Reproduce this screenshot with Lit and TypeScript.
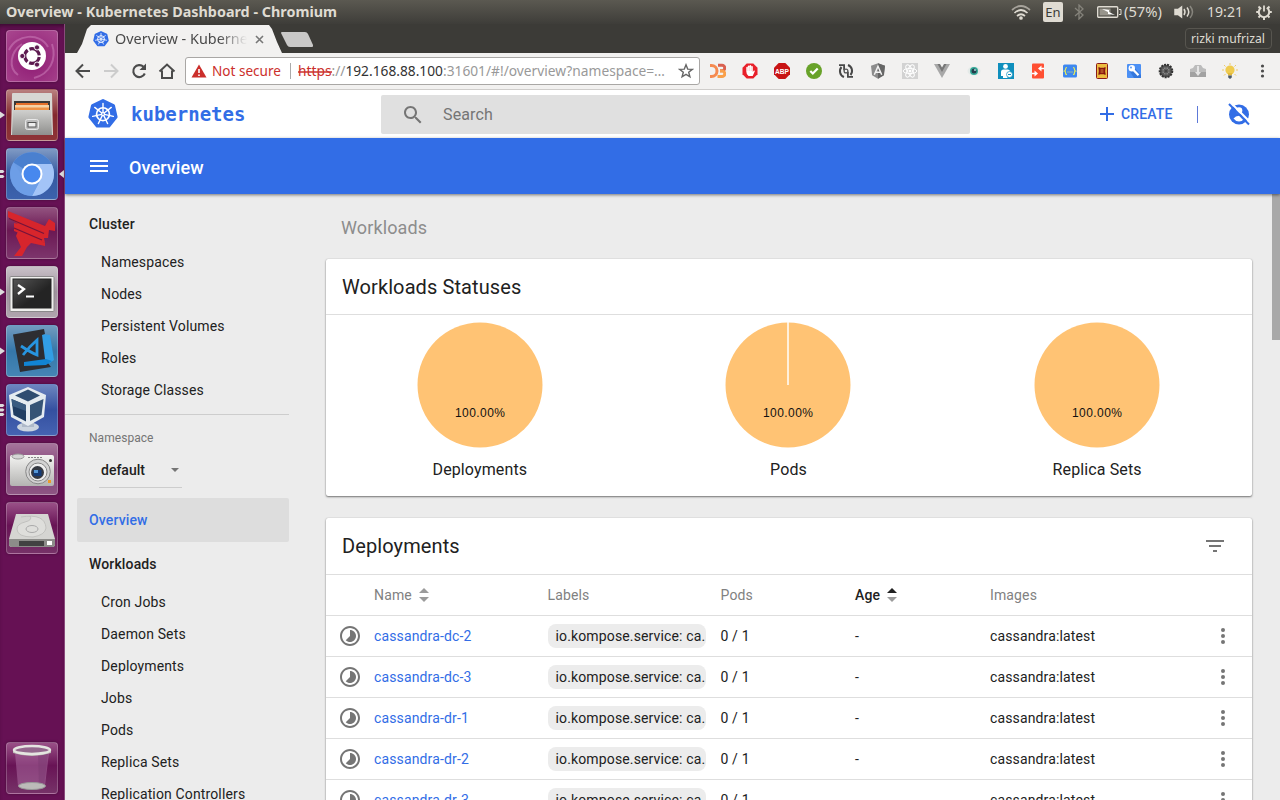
import { LitElement, html, svg, css } from "lit";
import { customElement } from "lit/decorators.js";

const label = (text: string, width: number, size: number, cls = "", height = 20, base = 15) => html`
  <svg class="fit ${cls}" width=${width} height=${height} viewBox="0 0 ${width} ${height}">
    <text x="0" y=${base} font-size=${size} textLength=${width} lengthAdjust="spacingAndGlyphs">${text}</text>
  </svg>`;

const pt = (r: number, i: number, off = 0) => {
  const a = ((i * 360) / 7 - 90 + off) * (Math.PI / 180);
  return [(16 + r * Math.cos(a)).toFixed(2), (16 + r * Math.sin(a)).toFixed(2)];
};
const seven = [0, 1, 2, 3, 4, 5, 6];
const helm = (size: number) => html`
  <svg width=${size} height=${size} viewBox="0 0 32 32">
    <polygon points=${seven.map((i) => pt(14.2, i).join(",")).join(" ")} fill="#326de6" stroke="#326de6" stroke-width="3.4" stroke-linejoin="round"/>
    <circle cx="16" cy="16.2" r="6.9" fill="none" stroke="#fff" stroke-width="1.8"/>
    ${seven.map((i) => {
      const a = pt(1.6, i), b = pt(11.3, i);
      return svg`<line x1=${a[0]} y1=${a[1]} x2=${b[0]} y2=${b[1]} stroke="#fff" stroke-width="1.5" stroke-linecap="round"/>`;
    })}
    <circle cx="16" cy="16" r="2.2" fill="#fff"/><circle cx="16" cy="16" r=".9" fill="#326de6"/>
  </svg>`;

const extIcons = [
  svg`<path d="M0 2.500h1.500a5.500 5.500 0 0 1 0 11H0" fill="none" stroke="#f58a50" stroke-width="3"/><path d="M8 2.300h4a2.600 2.600 0 0 1 0 5.500H10" fill="none" stroke="#d9604f" stroke-width="3"/><path d="M10 8h2a2.700 2.700 0 0 1 0 5.600H7.500" fill="none" stroke="#f9a04a" stroke-width="3"/>`,
  svg`<path d="M4.700.5h6.600l4.200 4.200v6.600l-4.200 4.200H4.700L.5 11.300V4.700z" fill="#e8202a"/><path d="M4.300 8.500V4.300q.8-.9 1.500 0V3q.9-1 1.700 0v-.5q1-.9 1.700 0V3.500q.9-.9 1.600 0V9l1-1.500q1.200-.3 1 .7L10.700 13H6.500Q4.300 11.500 4.300 8.500z" fill="#fff"/><path d="M5.900 4v4M7.600 3.500V8M9.300 4v4" stroke="#e8a0a0" stroke-width=".4"/>`,
  svg`<path d="M4.700 0h6.600L16 4.700v6.600L11.300 16H4.700L0 11.300V4.700z" fill="#c81414"/><text x="8" y="10.900" font-size="8" font-weight="700" text-anchor="middle" fill="#fff" letter-spacing="0" textLength="14" lengthAdjust="spacingAndGlyphs" font-family="Liberation Sans,sans-serif">ABP</text>`,
  svg`<circle cx="8" cy="8" r="8" fill="#68a229"/><path d="M4.300 8l2.500 2.500L11.700 5.500" fill="none" stroke="#fff" stroke-width="2.200"/>`,
  svg`<path d="M6 14A6.300 6.300 0 0 1 3.500 4M10 2a6.300 6.300 0 0 1 2.500 10" fill="none" stroke="#484848" stroke-width="2"/><path d="M1 1.200h6v6H5.200V3H1zM15 14.800H9v-6h1.800V13H15z" fill="#484848"/><circle cx="8" cy="8" r="1.900" fill="#f2f1f0" stroke="#555" stroke-width="1.300"/>`,
  svg`<path d="M8 .3l7 2.500-1.100 9.400L8 15.800l-5.900-3.600L1 2.800z" fill="#8c8c8c"/><path d="M8 .3l7 2.500-1.100 9.400L8 15.800z" fill="#666"/><path d="M4.300 11.800L8 3.300l3.700 8.500M5.800 9.200h4.400" fill="none" stroke="#f4f4f4" stroke-width="1.500"/>`,
  svg`<rect width="16" height="16" fill="#d2d2d2"/><g fill="none" stroke="#fff" stroke-width="1"><ellipse cx="8" cy="8" rx="6.800" ry="2.600"/><ellipse cx="8" cy="8" rx="6.800" ry="2.600" transform="rotate(60 8 8)"/><ellipse cx="8" cy="8" rx="6.800" ry="2.600" transform="rotate(120 8 8)"/></g><circle cx="8" cy="8" r="1.500" fill="#fff"/>`,
  svg`<path d="M0 1h16L8 15z" fill="#a8a8a8"/><path d="M3.500 1h9L8 9z" fill="#777"/><path d="M6 1h4L8 4.600z" fill="#f2f1f0"/>`,
  svg`<ellipse cx="8" cy="8" rx="6.500" ry="4.500" fill="#e4eae8"/><circle cx="8" cy="8" r="4" fill="#35aa98"/><circle cx="8" cy="8" r="2.500" fill="#253c4c"/><circle cx="9" cy="7" r=".9" fill="#b6e4e4"/>`,
  svg`<rect width="16" height="16" fill="#0f8fbd"/><circle cx="7.500" cy="3.400" r="2.400" fill="#fff"/><path d="M3 13V9q0-2.500 2.500-2.500h4.500q2 0 2.200 2.500L9.500 10v5H5V9.500v3.500z" fill="#fff"/><circle cx="11.500" cy="11.500" r="3" fill="#fff" stroke="#0f8fbd" stroke-width=".7"/><path d="M10 11.500h3" stroke="#0f8fbd"/>`,
  svg`<rect x="2" y=".5" width="12" height="15" rx="1" fill="#ff4f32"/><path d="M2 10.500h3M14 5.500h-3" stroke="#fff" stroke-width="1.500"/><path d="M4.500 7.500l3.500 3-3.500 3zM11.500 2.500L8 5.500l3.500 3z" fill="#fff"/>`,
  svg`<rect x="1" y="1.500" width="14" height="13" rx="1.500" fill="#3e87ef"/><path d="M5 4.500q-1.400 0-1.400 1.500T2.500 8q1.100.3 1.100 2T5 11.500M11 4.500q1.400 0 1.400 1.500t1.100 2q-1.100.3-1.100 2T11 11.500M5.500 9h1M7.500 9h1M9.500 9h1" fill="none" stroke="#e9ec58" stroke-width="1.200"/>`,
  svg`<rect x="2.500" y=".5" width="11" height="15" rx="1" fill="#edbb3f" stroke="#8b1a1a"/><path d="M4.500 4q3.500 2 7 0v2.500q-3.500 1.500-7 0zM4.500 9.500q3.500-1.500 7 0V12q-3.500-2-7 0z" fill="#7d1010"/><circle cx="8" cy="8" r="3.300" fill="#8b1610"/><path d="M6.500 7h3M6.500 9h3" stroke="#e9a94a" stroke-width=".8"/>`,
  svg`<rect x="1" y="1" width="14" height="14" rx="1" fill="#4c90f4"/><path d="M3 7l5 8h7v-3L8 4z" fill="#3578dd"/><circle cx="5.800" cy="5.300" r="3.200" fill="#fff"/><circle cx="5" cy="4.500" r=".9" fill="#4c90f4"/><path d="M7.500 7l5 5.300" stroke="#fff" stroke-width="2.200"/>`,
  svg`<circle cx="8" cy="8" r="6.300" fill="#555" stroke="#333" stroke-width="2" stroke-dasharray="2 1"/><circle cx="8" cy="8" r="3.800" fill="#858585"/><circle cx="8" cy="8" r="1.600" fill="#333"/><path d="M8 3v10M3 8h10M4.500 4.500l7 7M11.500 4.500l-7 7" stroke="#484848" stroke-width=".7"/>`,
  svg`<path d="M0 6l3-1 2-3h6l2 3 3 1v8H0z" fill="#bcbcbc"/><path d="M0 9h16v5H0z" fill="#a2a2a2"/><path d="M7 3h2v6h2l-3 4-3-4h2z" fill="#e6e6e6"/>`,
  svg`<g stroke="#edcb6a"><path d="M8 0v2M0 7h2M14 7h2M2 2l1.500 1.500M14 2l-1.500 1.500M2 12.500L3.500 11M14 12.500L12.500 11"/></g><circle cx="8" cy="7" r="4.600" fill="#efcb4f"/><path d="M6 10h4v2.500H6z" fill="#e3b93d"/><path d="M6.200 12.500h3.600v2L8 16l-1.800-1.500z" fill="#4d5b68"/>`,
];

const launcher = [
  { bg: "bfb", marks: 0, art: svg`<path d="M3 20C10 4 34 2 42 17M12 45C2 38 4 22 16 14M46 14c5 15-2 30-18 34" fill="none" stroke="#cf83bd" stroke-width="2" opacity=".5"/><circle cx="26" cy="26" r="14" fill="#fff"/><circle cx="26" cy="26" r="7.300" fill="none" stroke="#5d1a50" stroke-width="3.200" stroke-dasharray="13.300 2" stroke-dashoffset="-1"/><g fill="#5d1a50" stroke="#fff" stroke-width=".9"><circle cx="16.300" cy="26" r="2.600"/><circle cx="31" cy="17.400" r="2.600"/><circle cx="31" cy="34.600" r="2.600"/></g>` },
  { bg: "files", marks: 1, art: svg`<path d="M6 5q0-1 1-1h38q1 0 1 1l1 41H5z" fill="#d7d7d3"/><path d="M8 12h36v10H8z" fill="#3b3937"/><path d="M10 14h32v3H10z" fill="#e57029"/><path d="M9 16h34v5H9z" fill="#f5d3a6"/><path d="M9 18.500h34v3H9z" fill="#ee9347"/><path d="M7 21h38l1 25H6z" fill="url(#metal)"/><rect x="19.500" y="30.500" width="13" height="10" rx="2" fill="#bbb" stroke="#e8e8e8"/><rect x="22" y="33.500" width="8" height="4.500" fill="#eee" stroke="#555"/>` },
  { bg: "chromium", marks: 2, active: true, art: svg`<circle cx="26" cy="26" r="22" fill="#6a9be3"/><path d="M26 26L7.500 14.500A22 22 0 0 1 45.500 16H26z" fill="#4a80cf"/><path d="M27 16h18.600a22 22 0 0 1-19.600 32l9-18z" fill="#a3c4f7"/><path d="M7.500 14.500A22 22 0 0 0 26 48l8-15-15-1z" fill="#6d9ee7"/><circle cx="26" cy="26" r="10.500" fill="#fff"/><circle cx="26" cy="26" r="8.500" fill="#4788ee"/>` },
  { bg: "red", marks: 0, art: svg`<path d="M2 4l37 15 4-7 6 4v8l-6-1-1 8h-4l1 5L8 24v-8l4 1-10-7z" fill="#d7252c"/><path d="M11 29l26 7M13 22l26 14v3l-14-3-4 4-5 9H8l7-9-5-11z" fill="#d7252c"/><path d="M3 11.500l35 15M8 21l28 12" stroke="#74143b" stroke-width="1.300" fill="none"/>` },
  { bg: "term", marks: 1, art: svg`<rect x="4" y="10.500" width="44" height="35" rx="1" fill="#f0f0ee" stroke="#8b898a"/><rect x="7" y="13" width="38" height="29" fill="url(#dark)" stroke="#222"/><path d="M12 19l6 4-6 5" fill="none" stroke="#fff" stroke-width="2.300"/><path d="M20 30.500h8" stroke="#fff" stroke-width="2"/>` },
  { bg: "code", marks: 1, art: svg`<path d="M36 9l8 1 4 25-7 5-5-2z" fill="#329ee5"/><path d="M7 9.500L38 4l1 5-3 1 3 24 6 8-31 5z" fill="#2d2d31"/><path d="M18 37l22-3 6 2-6 4-22 1z" fill="#1184d3"/><path d="M15 21q9 6 16 9V15Q24 21 17 30" fill="none" stroke="#2795e0" stroke-width="2.800"/>` },
  { bg: "vbox", marks: 3, art: svg`<ellipse cx="22" cy="43" rx="11" ry="4.500" fill="#cbd4df"/><path d="M16 38h12v5H16z" fill="#aeb9c9"/><path d="M3 11L22 3l18 8-2 22-16 9-17-9z" fill="#e5ebf0"/><path d="M9 11.500L22 5.500l12 6-12 6z" fill="#304d70"/><path d="M5.500 15L20 21v16.500L7.500 31z" fill="#203d62"/><path d="M24 21l13.500-6-2 16-11.500 6z" fill="#365476"/><path d="M5.500 15L20 21v6L6.300 22z" fill="#3a5b80"/>` },
  { bg: "cam", marks: 0, art: svg`<rect x="4" y="12" width="44" height="31" rx="2" fill="url(#light)"/><ellipse cx="12" cy="13.500" rx="6" ry="2.500" fill="#d5d5d5" stroke="#999"/><path d="M22 14.500h14" stroke="#888" stroke-dasharray="2 1"/><circle cx="32" cy="28.500" r="12.300" fill="#d2d2d2" stroke="#888"/><circle cx="32" cy="29" r="9" fill="#eee" stroke="#888"/><circle cx="31.500" cy="29.500" r="6.500" fill="#353942"/><rect x="27.500" y="27" width="8" height="6" fill="#143b77"/><path d="M28 27h4v3h-4z" fill="#5396d7"/><rect x="42" y="37" width="3" height="3" fill="#ed9b27"/><circle cx="44.500" cy="17.500" r="1.500" fill="#333"/>` },
  { bg: "disk", marks: 0, art: svg`<path d="M10 12h32l7 25v5q0 3-3 3H6q-3 0-3-3v-5z" fill="#d5d5d2"/><path d="M3 37h46v5q0 3-3 3H6q-3 0-3-3z" fill="#8c8c89"/><path d="M13 39h25v5H13z" fill="#424242"/><path d="M41 39h5v4h-5z" fill="#fff"/><path d="M15 15q24-4 25 11-1 7-13 9-16 0-16-8 0-5 8-7 8-2 5-6" fill="#dededb" stroke="#b7b7b4" stroke-width=".7"/><ellipse cx="26" cy="27" rx="6" ry="3.500" fill="none" stroke="#aaa"/>` },
];
const trash = svg`<path d="M9 11l3 33q14 6 27 0l4-33z" fill="#b57bac" opacity=".45"/><path d="M32 12h10l-4 31q-4 2-5 2z" fill="#7a3a72" opacity=".45"/><ellipse cx="26" cy="44" rx="13.500" ry="3.500" fill="#bcbcb9" stroke="#999"/><path d="M7 8v3q19 6 38 0V8z" fill="#b8b8b3"/><ellipse cx="26" cy="8" rx="18" ry="4" fill="#94678d" stroke="#e5e5e1" stroke-width="2.500"/>`;

const cluster = ["Namespaces", "Nodes", "Persistent Volumes", "Roles", "Storage Classes"];
const workloads = ["Cron Jobs", "Daemon Sets", "Deployments", "Jobs", "Pods", "Replica Sets", "Replication Controllers"];
const pies = [{ name: "Deployments", seam: false }, { name: "Pods", seam: true }, { name: "Replica Sets", seam: false }];
const deployments = ["cassandra-dc-2", "cassandra-dc-3", "cassandra-dr-1", "cassandra-dr-2", "cassandra-dr-3"];

@customElement("app-root")
export class AppRoot extends LitElement {
  static styles = css`
    :host { display: flex; flex-direction: column; width: 1280px; height: 800px; overflow: hidden; font-family: Roboto, sans-serif; font-size: 14px; letter-spacing: 0.14px; color: #212121; background: #ececec; }
    * { box-sizing: border-box; }
    svg { display: block; flex: none; }
    .fit { overflow: visible; font-family: "Noto Sans", sans-serif; letter-spacing: 0; }
    .bold { font-weight: 700; }
    .paneltext { fill: #dfdbd2; }
    .tabtext { fill: #4a4a4a; }
    .panel { height: 24px; flex: none; background: linear-gradient(#5b5951, #3e3d39); display: flex; align-items: center; padding: 0 8px 0 6px; }
    .panel .tray { margin-left: auto; display: flex; align-items: center; }
    .lang { width: 20px; height: 20px; border-radius: 2px; background: #dfdbd2; color: #3c3b37; font: 13px "Noto Sans", sans-serif; letter-spacing: 0; text-align: center; line-height: 21px; margin: 0 11px 0 12px; }
    .battery { margin-left: 13px; }
    .percent { margin-left: 2px; }
    .volume { margin-left: 12px; }
    .clock { margin-left: 13px; }
    .power { margin-left: 13px; }
    .desk { display: flex; flex: 1; min-height: 0; }
    .dock { width: 65px; flex: none; background: #661154; border-right: 1px solid #8a4a7c; display: flex; flex-direction: column; gap: 7px; padding: 6px 0; box-shadow: inset 0 4px 4px -2px #3a0a30; }
    .slot { display: grid; grid-template-columns: 6px 52px 6px; height: 52px; align-items: center; flex: none; }
    .tile { width: 52px; height: 52px; border-radius: 4px; border: 1px solid rgba(255,255,255,.22); box-shadow: 0 0 3px rgba(0,0,0,.35); }
    .tile svg { margin: -1px; }
    .last { margin-top: auto; }
    .bfb { background: radial-gradient(circle at 50% 60%, #8e1a73, #a9478f); }
    .files { background: linear-gradient(#b9807f, #84292f 50%, #8e3437); }
    .chromium { background: linear-gradient(#7f9ac4, #3559a0 50%, #3c62ad); }
    .red { background: linear-gradient(#92527f, #6b1853 45%, #7d356c); }
    .term { background: linear-gradient(#c9c1c8, #9f929d 50%, #b0a5ae); }
    .code { background: linear-gradient(#729bbf, #3577a9 50%, #4585b5); }
    .vbox { background: linear-gradient(#6d86c0, #3450a0 50%, #4563b2); }
    .cam { background: linear-gradient(#a5749b, #824077 50%, #8d5583); }
    .disk, .trash { background: linear-gradient(#995087, #681355 45%, #763268); }
    .browser { flex: 1; display: flex; flex-direction: column; min-width: 0; }
    .tabs { height: 29px; flex: none; background: #3c3b37; display: flex; padding-left: 12px; }
    .tab { width: 205px; height: 29px; clip-path: polygon(0 100%, 5px 20px, 10px 5px, 14px 1px, 192px 1px, 195px 5px, 200px 18px, 205px 100%); background: #f2f1f0; display: flex; align-items: center; padding: 1px 0 0 16px; }
    .tab .name { margin-left: 6px; width: 133px; overflow: hidden; -webkit-mask-image: linear-gradient(90deg, #000 104px, transparent 132px); mask-image: linear-gradient(90deg, #000 104px, transparent 132px); }
    .close { margin-left: 7px; }
    .newtab { margin: 8px 0 0 -1px; }
    .user { margin: 4px 8px 0 auto; width: 87px; height: 21px; border: 1px solid #57554f; border-radius: 4px; background: #3c3b37; padding-left: 5px; }
    .toolbar { height: 37px; flex: none; background: #f2f1f0; border-bottom: 1px solid #cfcdcb; display: flex; align-items: center; padding-left: 8px; }
    .nav { display: flex; gap: 8px; margin-right: 8px; }
    .nav svg { width: 20px; height: 20px; }
    .omni { width: 515px; height: 28px; background: #fff; border: 1px solid #a9a7a5; border-radius: 3px; display: flex; align-items: center; padding: 0 5px 0 5px; }
    .omni .sep { width: 1px; height: 16px; background: #aaa; margin: 0 7px 0 9px; }
    .omni .fit { margin-top: 1px; }
    .insecure { margin-left: 5px; }
    .star { margin-left: auto; }
    .exts { display: flex; gap: 16px; margin-left: 10px; }
    .k8shead { height: 48px; flex: none; background: #fff; display: flex; align-items: center; padding-left: 23px; }
    .word { font: 700 19px "DejaVu Sans Mono", monospace; color: #326de6; letter-spacing: 0; margin-left: 13px; width: 250px; line-height: 22px; }
    .search { width: 589px; height: 39px; background: #e0e0e0; border-radius: 2px; display: flex; align-items: center; padding-left: 20px; gap: 18px; font-size: 16px; color: #757575; margin-top: 1px; }
    .create { margin-left: 125px; display: flex; align-items: center; gap: 2px; color: #326de6; font-weight: 500; letter-spacing: .14px; }
    .bar { width: 1px; height: 17px; background: #5d79d8; margin: 0 26px 0 24px; }
    .action { height: 56px; flex: none; background: #326de6; color: #fff; display: flex; align-items: center; padding-left: 22px; gap: 18px; font-size: 18px; font-weight: 500; letter-spacing: .1px; box-shadow: 0 1px 3px rgba(0,0,0,.5); z-index: 1; position: relative; }
    .action span { margin-top: 3px; }
    .page { flex: 1; min-height: 0; display: flex; background: #ececec; }
    .side { width: 224px; flex: none; padding-top: 8px; overflow: hidden; }
    .group { height: 44px; line-height: 44px; padding-left: 24px; font-weight: 500; }
    .item { height: 32px; line-height: 32px; padding-left: 36px; white-space: nowrap; }
    .rule { height: 1px; background: #cdcdcd; margin-top: 8px; }
    .nslabel { font-size: 12px; color: #757575; padding-left: 24px; height: 38px; line-height: 46px; letter-spacing: .05px; }
    .select { margin: 0 0 10px 34px; width: 83px; height: 35px; border-bottom: 1px solid #cdcdcd; font-weight: 500; letter-spacing: 0; display: flex; justify-content: space-between; align-items: center; padding: 0 3px 0 2px; }
    .current { height: 44px; margin-left: 12px; border-radius: 2px; background: #dddddd; padding-left: 12px; line-height: 44px; font-weight: 500; color: #326de6; }
    .main { flex: 1; min-width: 0; padding: 0 21px 0 37px; overflow: hidden; }
    h2 { margin: 0; height: 65px; line-height: 67px; padding-left: 15px; font-weight: 400; font-size: 18px; color: #8d8d8d; letter-spacing: .12px; }
    .card { width: 926px; margin-left: -.5px; background: #fff; border-radius: 2px; box-shadow: 0 1px 2px rgba(0,0,0,.5), 0 0 1px rgba(0,0,0,.25); }
    .title { height: 56px; border-bottom: 1px solid #dedede; padding: 0 25px 0 16.5px; font-size: 20px; letter-spacing: .1px; display: flex; justify-content: space-between; align-items: center; }
    .tall { height: 57px; }
    .pies { display: grid; grid-template-columns: repeat(3, 1fr); height: 181px; margin-bottom: 22px; }
    .pie { display: flex; flex-direction: column; align-items: center; padding-top: 7px; font-size: 16px; letter-spacing: .12px; gap: 12px; }
    .pie svg { font: 12px "Liberation Sans", sans-serif; letter-spacing: 0; }
    .row { display: grid; grid-template-columns: 48.5px 173.5px 173px 134.5px 135px 1fr 55px; height: 41px; align-items: center; border-bottom: 1px solid #dedede; }
    .head { color: #818181; }
    .th { display: flex; align-items: center; gap: 7px; }
    .sorted { font-weight: 500; color: #212121; letter-spacing: .14px; }
    .link { color: #326de6; }
    .status { margin-left: 12.5px; }
    .chip { width: 158px; height: 24px; line-height: 24px; border-radius: 8px; background: #ececec; padding-left: 8px; white-space: nowrap; overflow: hidden; }
    .track { width: 8px; flex: none; background: #ececec; }
    .thumb { height: 146px; background: #a8a8a8; }
  `;

  arrows(active: boolean) {
    return html`<svg width="10" height="14" viewBox="0 0 10 14"><path d="M0 5l5-5 5 5z" fill=${active ? "#212121" : "#9b9b9b"}/><path d="M0 9h10l-5 5z" fill="#9b9b9b"/></svg>`;
  }

  slotView(t: any, extra = "") {
    return html`<div class="slot ${extra}">
      <svg width="6" height="20" viewBox="0 0 6 20">${t.marks === 1 ? svg`<path d="M0 6.500L5 10 0 13.500z" fill="#ddd"/>` : t.marks === 2 ? svg`<path d="M0 6h3l1.500 1.500L3 9H0zM0 11h3l1.500 1.500L3 14H0z" fill="#ddd"/>` : t.marks === 3 ? svg`<path d="M0 4h3l1.500 1.200L3 7H0zM0 8.500h3l1.500 1.200L3 11.500H0zM0 13h3l1.500 1.200L3 16H0z" fill="#ddd"/>` : ""}</svg>
      <div class="tile ${t.bg}"><svg width="52" height="52" viewBox="0 0 52 52">
        <defs><linearGradient id="metal" x2="0" y2="1"><stop stop-color="#d0d0ce"/><stop offset="1" stop-color="#8f8f8d"/></linearGradient><linearGradient id="light" x2="0" y2="1"><stop stop-color="#f4f4f2"/><stop offset="1" stop-color="#b4b4b2"/></linearGradient><linearGradient id="dark" x2="1" y2="1"><stop stop-color="#555"/><stop offset=".6" stop-color="#242424"/></linearGradient></defs>
        ${t.art}</svg></div>
      ${t.active ? html`<svg width="6" height="10" viewBox="0 0 6 10"><path d="M6 1v8L1 5z" fill="#ddd"/></svg>` : ""}
    </div>`;
  }

  render() {
    return html`
      <div class="panel">
        ${label("Overview - Kubernetes Dashboard - Chromium", 331, 14, "bold paneltext", 20, 15)}
        <div class="tray">
          <svg width="20" height="16" viewBox="0 0 20 16" fill="none" stroke="#dfdbd2" stroke-width="1.700"><path d="M1 6Q10-2 19 6" opacity=".6"/><path d="M3.500 9Q10 3 16.500 9M6 12Q10 8.500 14 12"/><circle cx="10" cy="14" r="1" fill="#dfdbd2"/></svg>
          <div class="lang">En</div>
          <svg width="10" height="16" viewBox="0 0 10 16" fill="none" stroke="#85837b" stroke-width="1.300"><path d="M1 4l8 7-4 4V1l4 4-8 7"/></svg>
          <svg class="battery" width="25" height="14" viewBox="0 0 25 14"><rect x=".7" y="1.700" width="20" height="10.600" rx="1" fill="none" stroke="#dfdbd2" stroke-width="1.400"/><path d="M22 4.500h2v5h-2" fill="none" stroke="#dfdbd2"/><rect x="2.500" y="3.500" width="11" height="7" fill="#98958c"/><path d="M5 4l7 1v2l6 3-7-1V7z" fill="#fff"/></svg>
          <span class="percent">${label("(57%)", 38, 14, "paneltext")}</span>
          <svg class="volume" width="20" height="16" viewBox="0 0 20 16" fill="none" stroke="#dfdbd2" stroke-width="1.500"><path d="M1 5.500h3L7.500 3v10L4 10.500H1z" fill="#dfdbd2"/><path d="M10 5q2 3 0 6M13 3.500q3.500 4.500 0 9"/><path d="M16 2q5 6 0 12" opacity=".4"/></svg>
          <span class="clock">${label("19:21", 36, 14, "paneltext")}</span>
          <svg class="power" width="16" height="16" viewBox="0 0 16 16" fill="none" stroke="#dfdbd2"><path d="M5.200 3.600a5.200 5.200 0 1 0 5.600 0" stroke-width="2"/><path d="M8 1.500v6" stroke-width="1.800"/><path d="M.2 8h2.500M13.300 8h2.500M2.500 2.500l1.600 1.600M13.500 2.500l-1.600 1.600M2.500 13.500l1.600-1.600M13.500 13.500l-1.600-1.600M8 13v3" stroke-width="2"/></svg>
        </div>
      </div>
      <div class="desk">
        <div class="dock">
          ${launcher.map((t) => this.slotView(t))}
          ${this.slotView({ bg: "trash", marks: 0, art: trash }, "last")}
        </div>
        <div class="browser">
          <div class="tabs">
            <div class="tab">
              ${helm(16)}
              <div class="name">${label("Overview - Kubernetes", 153, 14.5, "tabtext", 20, 15)}</div>
              <svg class="close" width="9" height="9" viewBox="0 0 9 9"><path d="M1 1l7 7M8 1L1 8" stroke="#777" stroke-width="1.600"/></svg>
            </div>
            <svg class="newtab" width="33" height="15" viewBox="0 0 33 15"><path d="M0 1q0-1 1-1h23q2 0 3 2l5 11q.5 2-1 2H9q-2 0-3-2z" fill="#c9c8c7"/></svg>
            <div class="user">${label("rizki mufrizal", 74, 13, "paneltext", 18, 14)}</div>
          </div>
          <div class="toolbar">
            <div class="nav">
              <svg viewBox="0 0 20 20" fill="none" stroke="#4b4b4b" stroke-width="2"><path d="M17 10H4M10 3.500L3.500 10l6.500 6.500"/></svg>
              <svg viewBox="0 0 20 20" fill="none" stroke="#ccc" stroke-width="2"><path d="M3 10h13M10 3.500l6.500 6.500-6.500 6.500"/></svg>
              <svg viewBox="0 0 20 20"><path d="M15.800 12.500A6 6 0 1 1 14.500 5.800" fill="none" stroke="#4b4b4b" stroke-width="2.100"/><path d="M17 2.500V9h-6.500z" fill="#4b4b4b"/></svg>
              <svg viewBox="0 0 20 20" fill="none" stroke="#4b4b4b" stroke-width="2"><path d="M2.500 10.500L10 3.500l7.500 7M5 9.500V17h10V9.500"/></svg>
            </div>
            <div class="omni">
              <svg width="16" height="14" viewBox="0 0 16 14"><path d="M8 .5L15.500 13.500H.5z" fill="#cb2f2b"/><path d="M8 5v4M8 10.500V12" stroke="#fff" stroke-width="1.600"/></svg>
              <svg class="fit insecure" width="69" height="20"><text y="14" font-size="13.500" fill="#cb2f2b" textLength="69" lengthAdjust="spacingAndGlyphs">Not secure</text></svg>
              <span class="sep"></span>
              <svg class="fit" width="367" height="20"><text y="14" font-size="13.500" textLength="367" lengthAdjust="spacingAndGlyphs" fill="#999"><tspan fill="#cb2f2b">https</tspan>://<tspan fill="#333">192.168.88.100</tspan>:31601/#!/overview?namespace=…</text><path d="M0 10h34" stroke="#cb2f2b" stroke-width="1.300"/></svg>
              <svg class="star" width="16" height="16" viewBox="0 0 16 16"><path d="M8 1.800l1.700 4.300 4.600.3-3.600 2.900 1.200 4.500L8 11.300l-3.900 2.500 1.200-4.500L1.700 6.400l4.600-.3z" fill="none" stroke="#666" stroke-width="1.400"/></svg>
            </div>
            <div class="exts">
              ${extIcons.map((i) => html`<svg width="16" height="16" viewBox="0 0 16 16">${i}</svg>`)}
              <svg width="16" height="16" viewBox="0 0 16 16" fill="#4b4b4b"><circle cx="8.500" cy="3" r="1.600"/><circle cx="8.500" cy="8" r="1.600"/><circle cx="8.500" cy="13" r="1.600"/></svg>
            </div>
          </div>
          <div class="k8shead">
            ${helm(30)}
            <div class="word">kubernetes</div>
            <div class="search">
              <svg width="24" height="24" viewBox="0 0 24 24" fill="#757575"><path d="M15.500 14h-.79l-.28-.27C15.410 12.590 16 11.110 16 9.500 16 5.910 13.090 3 9.500 3S3 5.910 3 9.500 5.910 16 9.500 16c1.610 0 3.090-.59 4.230-1.570l.27.28v.79l5 4.990L20.490 19l-4.990-5zm-6 0C7.010 14 5 11.990 5 9.500S7.010 5 9.500 5 14 7.010 14 9.500 11.990 14 9.500 14z"/></svg>
              <span>Search</span>
            </div>
            <div class="create">
              <svg width="24" height="24" viewBox="0 0 24 24" fill="#326de6"><path d="M19 13h-6v6h-2v-6H5v-2h6V5h2v6h6v2z"/></svg>
              <span>CREATE</span>
            </div>
            <div class="bar"></div>
            <svg width="30" height="30" viewBox="0 0 30 30"><circle cx="15" cy="15.500" r="10" fill="#326de6"/><circle cx="15" cy="11.500" r="3.300" fill="#fff"/><path d="M9.500 19.500q2-2.800 5.500-2.800t5.500 2.800q-2.200 3-5.500 3t-5.500-3z" fill="#fff"/><path d="M7 4l19 19" stroke="#fff" stroke-width="2.200"/><path d="M5 5l20 20.500" stroke="#326de6" stroke-width="2"/></svg>
          </div>
          <div class="action">
            <svg width="24" height="24" viewBox="0 0 24 24" fill="#fff"><path d="M3 18h18v-2H3v2zm0-5h18v-2H3v2zm0-7v2h18V6H3z"/></svg>
            <span>Overview</span>
          </div>
          <div class="page">
            <div class="side">
              <div class="group">Cluster</div>
              ${cluster.map((c) => html`<div class="item">${c}</div>`)}
              <div class="rule"></div>
              <div class="nslabel">Namespace</div>
              <div class="select"><span>default</span><svg width="8" height="4" viewBox="0 0 8 4"><path d="M0 0h8L4 4z" fill="#757575"/></svg></div>
              <div class="current">Overview</div>
              <div class="group">Workloads</div>
              ${workloads.map((c) => html`<div class="item">${c}</div>`)}
            </div>
            <div class="main">
              <h2>Workloads</h2>
              <div class="card">
                <div class="title">Workloads Statuses</div>
                <div class="pies">
                  ${pies.map((p) => html`<div class="pie">
                    <svg width="126" height="126" viewBox="0 0 126 126"><circle cx="63" cy="63" r="62.500" fill="#ffc374"/>${p.seam ? svg`<path d="M63 0v63" stroke="#fff" stroke-width="1.500"/>` : ""}<text x="63" y="94.500" text-anchor="middle" textLength="50" fill="#111">100.00%</text></svg>
                    <span>${p.name}</span>
                  </div>`)}
                </div>
              </div>
              <div class="card">
                <div class="title tall"><span>Deployments</span><svg width="24" height="24" viewBox="0 0 24 24" fill="#757575"><path d="M10 18h4v-2h-4v2zM3 6v2h18V6H3zm3 7h12v-2H6v2z"/></svg></div>
                <div class="row head"><span></span><span class="th">Name ${this.arrows(false)}</span><span>Labels</span><span>Pods</span><span class="th sorted">Age ${this.arrows(true)}</span><span>Images</span></div>
                ${deployments.map((d) => html`<div class="row">
                  <svg class="status" width="24" height="24" viewBox="0 0 24 24" fill="#757575"><path d="M16.240 7.760C15.070 6.590 13.540 6 12 6v6l-4.240 4.240c2.340 2.340 6.140 2.340 8.490 0 2.340-2.340 2.340-6.140-.01-8.480zM12 2C6.480 2 2 6.480 2 12s4.480 10 10 10 10-4.480 10-10S17.520 2 12 2zm0 18c-4.420 0-8-3.580-8-8s3.580-8 8-8 8 3.580 8 8-3.580 8-8 8z"/></svg>
                  <span class="link">${d}</span><span class="chip">io.kompose.service: ca.</span><span>0 / 1</span><span>-</span><span>cassandra:latest</span>
                  <svg width="54" height="24" viewBox="0 0 54 24" fill="#757575"><circle cx="26" cy="6" r="2"/><circle cx="26" cy="12" r="2"/><circle cx="26" cy="18" r="2"/></svg>
                </div>`)}
              </div>
            </div>
            <div class="track"><div class="thumb"></div></div>
          </div>
        </div>
      </div>`;
  }
}
